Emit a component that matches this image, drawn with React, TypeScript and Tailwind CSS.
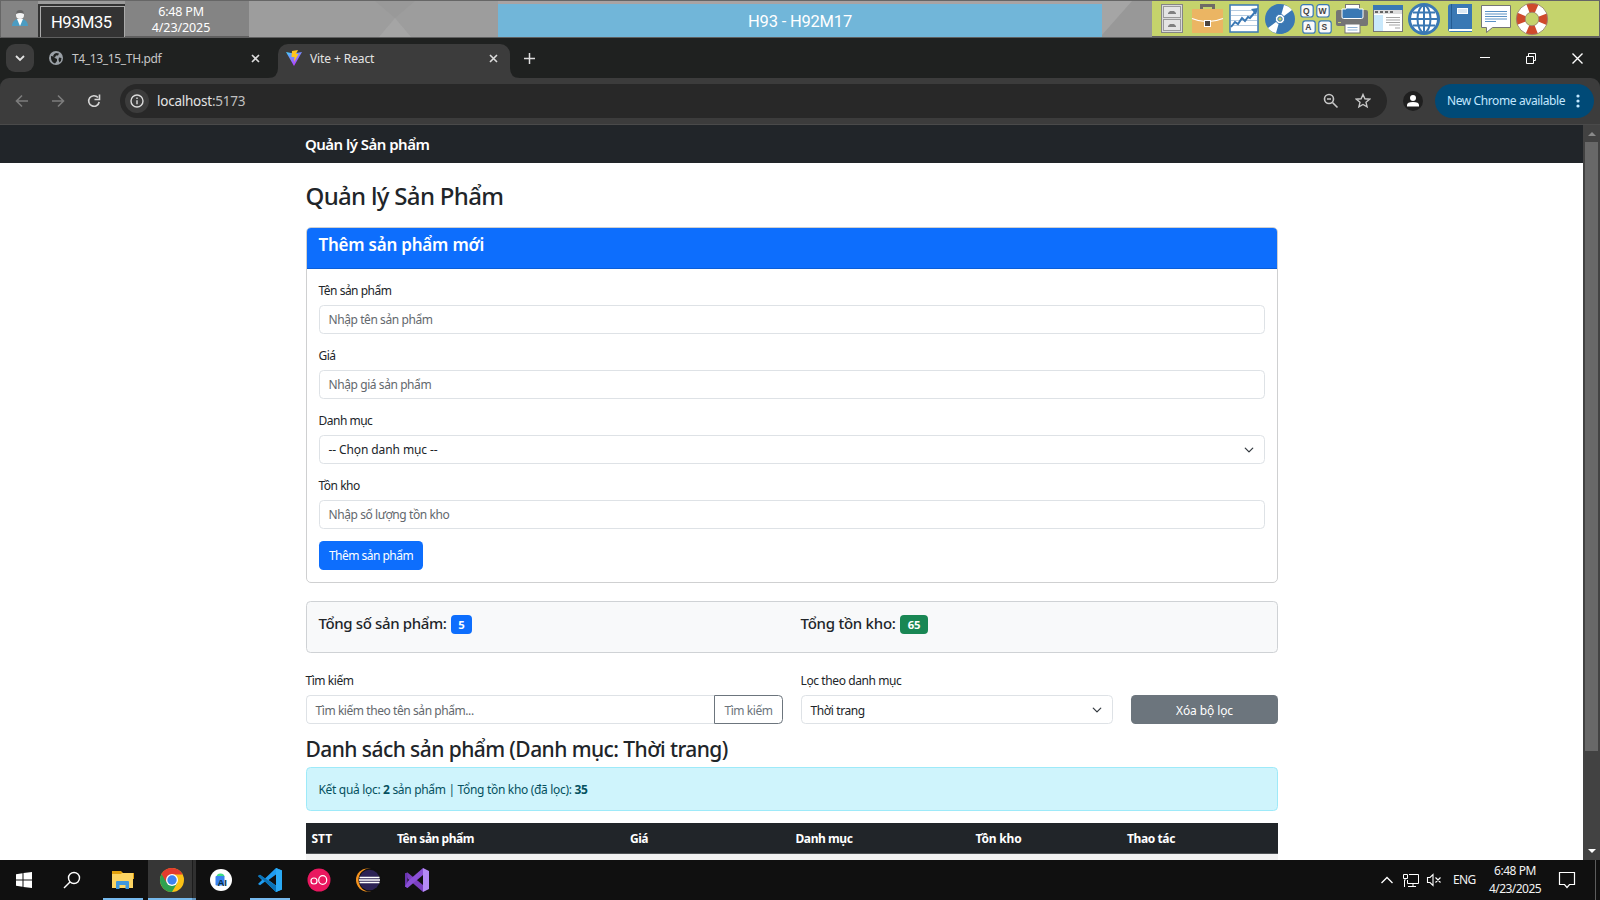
import type { ReactNode } from "react";

const noto = "font-['Noto_Sans','Open_Sans',sans-serif]";
const roboto = "font-['Roboto','Noto_Sans',sans-serif]";

/* A slice of a horizontal icon strip; children are drawn in strip coordinates. */
function Slot({ x, w, h, top = 0, children }: { x: number; w: number; h: number; top?: number; children?: ReactNode }) {
  return (
    <svg className="block shrink-0" width={w} height={h} viewBox={`${x} ${top} ${w} ${h}`} fill="none">
      {children}
    </svg>
  );
}

function TrayIcons() {
  const key = (x: number, y: number, c: string) => (
    <g key={c}>
      <rect x={x} y={y} width="12.4" height="12.4" rx="2.5" fill="#fafafa" stroke="#3a78b4" strokeWidth="1.2" />
      <text x={x + 5.6} y={y + 9} textAnchor="middle" fontSize="8.5" fontWeight="700" fill="#444" fontFamily="Liberation Sans, sans-serif">{c}</text>
    </g>
  );
  return (
    <div className="flex h-[35px] w-[447px] bg-[#c5d36c]">
      <Slot top={1} x={1152} w={36} h={35}>
        <rect x="1161.5" y="4.5" width="21" height="28" fill="#d9d9d9" stroke="#858585" />
        <rect x="1163.5" y="6.5" width="17" height="11" fill="#e4e4e4" stroke="#999" />
        <rect x="1163.5" y="19.5" width="17" height="11" fill="#e4e4e4" stroke="#999" />
        <path d="M1168 14v-1l2-2h4l2 2v1zM1168 27v-1l2-2h4l2 2v1z" fill="#808080" />
      </Slot>
      <Slot top={1} x={1188} w={38} h={35}>
        <path d="M1201.5 9V5.5h12V9" stroke="#6e6a66" strokeWidth="3" />
        <rect x="1192" y="9" width="31" height="24" fill="#ebb563" />
        <path d="M1192 18.500q15 6.500 31 0" stroke="#fff" strokeWidth="1.200" />
        <rect x="1204.500" y="20.500" width="6" height="6" fill="#4d4640" stroke="#fff" />
      </Slot>
      <Slot top={1} x={1226} w={36} h={35}>
        <rect x="1230" y="5" width="28" height="27" fill="#fff" stroke="#3a78b4" strokeWidth="1.500" />
        <path d="M1231 10.500h26M1231 15.500h26M1231 20.500h26M1231 25.500h26" stroke="#b5cbe0" />
        <path d="m1231 27 4-5 3 2 4-6 3 3 3-4 2 1 6-7" stroke="#3a78b4" strokeWidth="2" />
        <path d="m1251 9 7-1-2 7z" fill="#3a78b4" />
      </Slot>
      <Slot top={1} x={1262} w={36} h={35}>
        <circle cx="1280" cy="19" r="15" fill="#3a78b4" />
        <path d="m1280 19-8-12q4-3 7-3zM1280 19l8 12q-4 3-7 3z" fill="#3a78b4" />
        <path d="m1280 19 4-14q5 1 8 5zM1280 19l-4 14q-5-1-8-5z" fill="#fff" />
        <circle cx="1280" cy="19" r="4.700" fill="#fff" stroke="#3a78b4" />
        <circle cx="1280" cy="19" r="2.200" fill="#c5d36c" stroke="#3a78b4" />
      </Slot>
      <Slot top={1} x={1298} w={36} h={35}>
        {key(1300.8, 4.6, "Q")}
        {key(1316.8, 4.6, "W")}
        {key(1302.8, 20.8, "A")}
        {key(1318.8, 20.8, "S")}
      </Slot>
      <Slot top={1} x={1334} w={36} h={35}>
        <rect x="1336" y="10" width="32" height="16" rx="2" fill="#757575" />
        <rect x="1345.500" y="4.500" width="14" height="6" fill="#fff" stroke="#757575" />
        <path d="M1342 9h4v-1h13v1h4v8q0 1.500-1.500 1.500h-18q-1.500 0-1.500-1.500z" fill="#3a78b4" stroke="#fff" />
        <rect x="1345" y="24" width="15" height="9" fill="#fff" stroke="#757575" />
        <path d="M1347.500 27.500h10M1347.500 30h10" stroke="#8fb3d6" />
        <path d="M1338 22.500h3" stroke="#c5d36c" />
      </Slot>
      <Slot top={1} x={1370} w={36} h={35}>
        <rect x="1373.500" y="5.500" width="29" height="26" fill="#fff" stroke="#757575" />
        <rect x="1373" y="5" width="30" height="5" fill="#3a78b4" />
        <path d="M1374 12h28" stroke="#ddd" strokeWidth="4" />
        <path d="M1375 12h18" stroke="#666" strokeWidth="2" strokeDasharray="3 2" />
        <rect x="1374" y="15" width="9" height="16" fill="#c9e8fb" />
        <path d="M1386 17.500h14M1386 20h14M1386 22.500h14M1389 25h11M1395 28h5" stroke="#a5a5a5" />
      </Slot>
      <Slot top={1} x={1406} w={38} h={35}>
        <circle cx="1424" cy="19" r="16" fill="#3a78b4" />
        <circle cx="1424" cy="19" r="13" fill="#fff" />
        <path d="M1424 5v28M1411 19h26M1413 12.500h22M1413 25.500h22" stroke="#3a78b4" strokeWidth="2" />
        <ellipse cx="1424" cy="19" rx="6.500" ry="13.500" stroke="#3a78b4" strokeWidth="2" />
      </Slot>
      <Slot top={1} x={1444} w={32} h={35}>
        <path d="M1448 7q0-3 3-3h21v28h-21q-3 0-3-3z" fill="#3a78b4" />
        <path d="M1451.500 4v25" stroke="#245b92" />
        <path d="M1449 30h23" stroke="#fff" strokeWidth="2" />
        <rect x="1457.500" y="8.500" width="10" height="5" fill="#dce8f4" stroke="#fff" />
      </Slot>
      <Slot top={1} x={1476} w={38} h={35}>
        <path d="M1481.500 5.500h29v22h-18l-6 5v-5h-5z" fill="#fff" stroke="#757575" />
        <path d="M1485 11.500h22M1485 14h22M1485 16.500h22M1485 19h22M1485 21.500h11" stroke="#5b92c5" />
      </Slot>
      <Slot top={1} x={1514} w={38} h={35}>
        <circle cx="1532" cy="19" r="11.300" stroke="#fff" strokeWidth="8.500" />
        <circle cx="1532" cy="19" r="11.300" stroke="#cf4a2c" strokeWidth="9" strokeDasharray="8.875 8.875" strokeDashoffset="4.440" />
        <circle cx="1532" cy="19" r="15.700" stroke="#94806f" strokeWidth=".8" />
        <circle cx="1532" cy="19" r="6.800" stroke="#94806f" strokeWidth=".8" />
      </Slot>
    </div>
  );
}

function ControlBar() {
  return (
    <header className={`flex h-[38px] border border-b-2 border-[#666] border-b-[#5f5f5f] bg-[#9c9c9c] ${roboto}`}>
      <div className="flex h-[36px] w-[37px] bg-[#848484]">
        <svg className="ml-[11px] mt-[9px]" width="16" height="17" viewBox="0 0 16 17">
          <path d="M0 16q0-5 5-7h6q5 2 5 7z" fill="#4c9cc2" />
          <path d="m5 9 3 7 3-7z" fill="#fff" />
          <circle cx="8" cy="5" r="4" fill="#f4f4f4" />
          <path d="M4 4q0-4 4-4t4 4q-4-2-8 0z" fill="#666" />
        </svg>
      </div>
      <div className="mt-[3px] h-[33px] w-[87px] bg-[#333] pl-[2px] pt-[2px]">
        <div className="h-full border border-b-0 border-[#aaa] pl-[10px] text-[16.500px] leading-[31px] tracking-[-0.45px] text-white">H93M35</div>
      </div>
      <div className={`w-[124px] bg-[#848484] pr-[12px] pt-[3px] text-center text-[12.500px] leading-[16px] text-white ${noto}`}>
        <div className="tracking-[-0.2px]">6:48 PM</div>
        <div className="tracking-[-0.1px]">4/23/2025</div>
      </div>
      <svg className="h-[36px] w-[249px]" viewBox="0 0 249 36">
        <rect width="249" height="36" fill="#9d9d9d" />
        <path d="m126 0 20 17 20-17z" fill="#999" />
        <path d="m130 36 16-19 16 19z" fill="#a5a5a5" />
      </svg>
      <div className="h-[36px] w-[604px] bg-[#a9a3a3] pt-[3px]">
        <div className="h-[33px] bg-[#71b6d9] text-center text-[16.500px] leading-[35px] tracking-[-0.2px] text-white">H93 - H92M17</div>
      </div>
      <svg className="h-[36px] w-[50px]" viewBox="0 0 50 36">
        <rect width="50" height="36" fill="#989898" />
        <path d="M0 0h30L0 34z" fill="#a5a5a5" />
      </svg>
      <TrayIcons />
    </header>
  );
}

function CloseX() {
  return (
    <svg width="9" height="9" viewBox="0 0 9 9" stroke="#dcdcdc" strokeWidth="1.600">
      <path d="m1 1 7 7M8 1 1 8" />
    </svg>
  );
}

function TabStrip() {
  return (
    <div className={`flex h-[40px] bg-[#1f2120] pl-[6px] pt-[6px] text-[12px] leading-[29px] ${noto}`}>
      <div className="flex h-[28px] w-[28px] items-center justify-center rounded-[9px] bg-[#3c3c3c]">
        <svg width="10" height="7" viewBox="0 0 10 7" fill="none" stroke="#e3e3e3" strokeWidth="1.800"><path d="m1 1 4 4 4-4" /></svg>
      </div>
      <div className="flex w-[244px] pl-[15px] text-[#c7c7c7]">
        <svg className="mt-[7px]" width="14" height="14" viewBox="0 0 14 14">
          <circle cx="7" cy="7" r="7" fill="#9aa0a6" />
          <path d="M2 5q3 0 4 2l2 1v2l-2 2.500Q1.500 11 2 5zM7 2q2 0 3 .5l-1 2H7l-1 2-2-1.500q1-2.500 3-3zM10 6.500l2.500.5q0 3-2 4.500L9.500 9z" fill="#1f2120" />
        </svg>
        <span className="w-[188px] pl-[9px] tracking-[-0.35px]">T4_13_15_TH.pdf</span>
        <span className="mt-[10px]"><CloseX /></span>
      </div>
      <div className="relative flex h-[34px] w-[232px] rounded-t-[10px] bg-[#3c3c3c] pl-[8px] text-[#e3e3e3]">
        <svg className="absolute -left-[10px] bottom-0" width="10" height="10" viewBox="0 0 10 10"><path d="M10 0v10H0Q10 10 10 0" fill="#3c3c3c" /></svg>
        <svg className="absolute -right-[10px] bottom-0" width="10" height="10" viewBox="0 0 10 10"><path d="M0 0v10h10Q0 10 0 0" fill="#3c3c3c" /></svg>
        <svg className="mt-[6px]" width="16" height="16" viewBox="0 0 16 16">
          <defs><linearGradient id="vite" x1="0" y1="0" x2=".6" y2="1"><stop stopColor="#41d1ff" /><stop offset="1" stopColor="#bd34fe" /></linearGradient></defs>
          <path d="M0 2l7.500 1.500L16 2 8 16z" fill="url(#vite)" />
          <path d="m6 1 6-1-2 4h2.500L8 12l.5-5H5.500z" fill="#ffc51c" />
        </svg>
        <span className="w-[187px] pl-[8px] tracking-[-0.1px]">Vite + React</span>
        <span className="mt-[10px]"><CloseX /></span>
      </div>
      <svg className="ml-[14px] mt-[9px]" width="11" height="11" viewBox="0 0 11 11" stroke="#dedede" strokeWidth="1.500"><path d="M5.500 0v11M0 5.500h11" /></svg>
      <svg className="ml-auto mr-[17px] mt-[9px]" width="103" height="11" viewBox="0 0 103 11" fill="none" stroke="#fff">
        <path d="M0 4.500h10M46.500 3.500h7v7h-7zM48.500 3v-2.500h7v7H54" />
        <path d="m92.500 .5 10 10M102.500 .5l-10 10" strokeWidth="1.400" />
      </svg>
    </div>
  );
}

function Toolbar() {
  return (
    <div className="bg-[#1f2120]">
      <div className={`flex h-[47px] items-start rounded-t-[9px] border-b border-[#4a4a4a] bg-[#3c3c3c] pt-[6px] ${noto}`}>
        <svg className="ml-[14px] mt-[9px]" width="90" height="16" viewBox="14 0 90 16" fill="none" stroke="#7c7c7c" strokeWidth="1.600">
          <path d="M28 8H16.500M22 2.500 16.500 8l5.500 5.500M52 8h11.500M58 2.500 63.500 8 58 13.500" />
          <path d="M98 4.500A5.300 5.300 0 1 0 99.200 9" stroke="#d5d5d5" />
          <path d="M99.500 1.500v5h-5" stroke="#d5d5d5" />
        </svg>
        <div className="ml-[16px] flex h-[34px] w-[1267px] items-center rounded-full bg-[#282828] pl-[5px]">
          <span className="flex h-[24px] w-[24px] items-center justify-center rounded-full bg-[#3c3c3c]">
            <svg width="14" height="14" viewBox="0 0 14 14" fill="none" stroke="#dcdcdc" strokeWidth="1.400">
              <circle cx="7" cy="7" r="6" /><path d="M7 6.200v4M7 3.500v1.500" />
            </svg>
          </span>
          <span className="ml-[8px] text-[13.500px] leading-[34px] tracking-[-0.24px] text-[#e3e3e3]">localhost<span className="text-[#c0c0c0]">:5173</span></span>
          <svg className="ml-auto" width="16" height="16" viewBox="0 0 16 16" fill="none" stroke="#c7c7c7" strokeWidth="1.600">
            <circle cx="6" cy="6" r="4.500" /><path d="m9.500 9.500 5 5M4 6h4" />
          </svg>
          <svg className="ml-[16px] mr-[16px]" width="16" height="16" viewBox="0 0 16 16" fill="none" stroke="#c7c7c7" strokeWidth="1.400">
            <path d="m8 1.500 1.900 4.300 4.700.4-3.600 3.100 1.100 4.600L8 11.500l-4.100 2.400L5 9.300 1.400 6.200l4.700-.4z" />
          </svg>
        </div>
        <svg className="ml-[16px] mt-[7px]" width="20" height="20" viewBox="0 0 20 20">
          <circle cx="10" cy="10" r="10" fill="#1f1f1f" />
          <circle cx="10" cy="7" r="3" fill="#fff" />
          <path d="M4 15.500v-1.500q0-3 6-3t6 3v1.500z" fill="#fff" />
        </svg>
        <div className="ml-[12px] flex h-[34px] w-[159px] items-center rounded-full bg-[#004a77] pl-[12px]">
          <span className="w-[129px] text-[12px] leading-[34px] tracking-[-0.4px] text-[#c2e7ff]">New Chrome available</span>
          <svg width="4" height="14" viewBox="0 0 4 14" fill="#c2e7ff"><circle cx="2" cy="2" r="1.600" /><circle cx="2" cy="7" r="1.600" /><circle cx="2" cy="12" r="1.600" /></svg>
        </div>
      </div>
    </div>
  );
}

function Chevron() {
  return (
    <svg className="ml-auto mr-[10px]" width="10" height="10" viewBox="0 0 16 16" fill="none" stroke="#343a40" strokeWidth="2" strokeLinecap="round" strokeLinejoin="round">
      <path d="m2 5 6 6 6-6" />
    </svg>
  );
}

const control = "flex h-[29px] items-center rounded-[4.500px] border border-[#dee2e6] bg-white pl-[8.500px] text-[12px] leading-[18px] whitespace-nowrap";
const label = "mb-[5px] -ml-[0.5px] h-[19px] text-[12px] leading-[20px]";

function Field({ name, text, select }: { name: string; text: string; select?: boolean }) {
  return (
    <div className="mb-3">
      <div className={`${label} tracking-[-0.5px]`}>{name}</div>
      {select ? (
        <div className={`${control} tracking-[-0.1px]`}>{text}<Chevron /></div>
      ) : (
        <div className={`${control} tracking-[-0.42px] text-[#63686d]`}>{text}</div>
      )}
    </div>
  );
}

function ProductForm() {
  return (
    <section className="mt-[17px] h-[356px] overflow-hidden rounded-[5px] border border-[#cfd0d1] bg-white">
      <h4 className="h-[41px] border-b border-[#0b5ed7] bg-[#0d6efd] px-[11.500px] pt-[7px] text-[17px] font-semibold leading-[20px] tracking-[-0.22px] text-white">Thêm sản phẩm mới</h4>
      <div className="p-3">
        <Field name="Tên sản phẩm" text="Nhập tên sản phẩm" />
        <Field name="Giá" text="Nhập giá sản phẩm" />
        <Field name="Danh mục" text="-- Chọn danh mục --" select />
        <Field name="Tồn kho" text="Nhập số lượng tồn kho" />
        <button className="block h-[29px] w-[104px] whitespace-nowrap rounded-[4.500px] bg-[#0d6efd] text-[12px] leading-[29px] tracking-[-0.52px] text-white">Thêm sản phẩm</button>
      </div>
    </section>
  );
}

function Summary() {
  return (
    <section className="mt-[18px] flex h-[52px] rounded-[4.500px] border border-[#cfd2d5] bg-[#f8f9fa] pl-[11.500px] pt-3 text-[15px] font-medium leading-[18px]">
      <div className="flex w-[482px]">
        <span className="w-[132.500px] whitespace-nowrap tracking-[-0.37px]">Tổng số sản phẩm:</span>
        <span className="mt-px h-[19px] w-[21px] rounded-[4px] bg-[#0d6efd] text-center text-[11.300px] font-bold leading-[20px] text-white">5</span>
      </div>
      <span className="w-[99.500px] whitespace-nowrap tracking-[-0.25px]">Tổng tồn kho:</span>
      <span className="mt-px h-[19px] w-[28px] rounded-[4px] bg-[#198754] text-center text-[11.300px] font-bold leading-[20px] tracking-[-0.3px] text-white">65</span>
    </section>
  );
}

function Filters() {
  return (
    <section className="mt-[18px] flex items-end">
      <div className="w-[477px]">
        <div className={`${label} tracking-[-0.45px]`}>Tìm kiếm</div>
        <div className="flex">
          <div className={`${control} w-[408px] rounded-r-none border-r-0 pt-[2px] tracking-[-0.43px] text-[#63686d]`}>Tìm kiếm theo tên sản phẩm...</div>
          <button className="h-[29px] w-[69px] whitespace-nowrap rounded-r-[4.500px] border border-[#6c757d] text-[12px] leading-[29px] tracking-[-0.42px] text-[#6c757d]">Tìm kiếm</button>
        </div>
      </div>
      <div className="ml-[18px] w-[312px]">
        <div className={`${label} tracking-[-0.4px]`}>Lọc theo danh mục</div>
        <div className={`${control} tracking-[-0.4px]`}><span className="pt-[2px]">Thời trang</span><Chevron /></div>
      </div>
      <button className="ml-[18px] h-[29px] w-[147px] rounded-[4.500px] bg-[#6c757d] text-[12px] leading-[31px] tracking-[-0.1px] text-white">Xóa bộ lọc</button>
    </section>
  );
}

function Results() {
  return (
    <>
      <h3 className="-ml-[0.5px] mt-[13px] h-[24px] whitespace-nowrap text-[21px] font-medium leading-[25px] tracking-[-0.57px]">Danh sách sản phẩm (Danh mục: Thời trang)</h3>
      <div className="mt-[6px] h-[44px] whitespace-nowrap rounded-[4.500px] border border-[#9eeaf9] bg-[#cff4fc] pl-[11.500px] pt-3 text-[12px] leading-[20px] tracking-[-0.32px] text-[#055160]">
        Kết quả lọc: <b>2</b> sản phẩm | Tổng tồn kho (đã lọc): <b>35</b>
      </div>
      <div className="mt-3 grid h-[31px] grid-cols-[85px_233px_166px_180px_151px_157px] border-b border-[#4d5154] bg-[#212529] text-[12px] font-bold leading-[31px] text-white">
        <span className="pl-[5.500px]">STT</span>
        <span className="pl-[6px] tracking-[-0.46px]">Tên sản phẩm</span>
        <span className="pl-[6px] tracking-[-0.5px]">Giá</span>
        <span className="pl-[5.500px] tracking-[-0.42px]">Danh mục</span>
        <span className="pl-[5.500px] tracking-[-0.18px]">Tồn kho</span>
        <span className="pl-[6px] tracking-[-0.4px]">Thao tác</span>
      </div>
      <div className="h-[40px] bg-[#f2f2f2]" />
    </>
  );
}

function Taskbar() {
  return (
    <footer className={`flex h-[40px] bg-[#101010] text-[12px] text-[#f2f2f2] ${noto}`}>
      <Slot x={0} w={48} h={40}>
        <path d="M16 14.300 22.500 13.300V19.500H16zM23.500 13.100 32 12v7.500h-8.500zM16 20.500h6.500v6.200L16 25.700zM23.500 20.500H32V28l-8.500-1.100z" fill="#fff" />
      </Slot>
      <Slot x={48} w={52} h={40}>
        <circle cx="74" cy="18" r="5.500" stroke="#fff" strokeWidth="1.400" />
        <path d="m70 22-6 6" stroke="#fff" strokeWidth="1.400" />
      </Slot>
      <Slot x={100} w={48} h={40}>
        <path d="M112 11h9l2 2h11v6h-22z" fill="#e2a10d" />
        <path d="M112 14h9l1-1h11v15h-21z" fill="#fcd462" />
        <path d="M116 29v-7q0-1 1-1h11q1 0 1 1v7h-3.500v-4h-6v4z" fill="#3f97dc" />
        <rect x="103" y="38" width="40" height="2" fill="#76b9ed" />
      </Slot>
      <Slot x={148} w={48} h={40}>
        <rect x="148" width="44" height="40" fill="#363636" />
        <rect x="192" width="1" height="40" fill="#1c1c1c" />
        <rect x="193" width="3" height="40" fill="#303030" />
        <circle cx="172" cy="20" r="12" fill="#fbc116" />
        <path d="M172 20 161.600 14A12 12 0 0 0 172 32l5.200-9z" fill="#2fa14f" />
        <path d="M172 14.500h10.600A12 12 0 0 0 161.600 14l5 8.800z" fill="#e33b2e" />
        <circle cx="172" cy="20" r="6" fill="#fff" />
        <circle cx="172" cy="20" r="4.700" fill="#3f83f0" />
        <rect x="148" y="38" width="44" height="2" fill="#76b9ed" />
        <rect x="192" y="38" width="4" height="2" fill="#5f93bd" />
      </Slot>
      <Slot x={196} w={50} h={40}>
        <circle cx="221" cy="20" r="11" fill="#fff" />
        <path d="M216.500 17a4 3.500 0 0 1 8 0z" fill="#3ddc84" />
        <rect x="215.500" y="16" width="9" height="9.500" rx="1" fill="#3b83ef" />
        <text x="217.500" y="26" fontSize="9.500" fontWeight="700" fill="#073042" fontFamily="Liberation Sans, sans-serif">AI</text>
      </Slot>
      <Slot x={246} w={48} h={40}>
        <path d="m276 8 6 2.500v19L276 32l-11-10.500-5 3.800-2-1.300 4-4-4-4 2-1.300 5 3.800zM276 14.500 268.500 20l7.500 5.500z" fill="#1f9cf0" fillRule="evenodd" />
        <path d="M258 16 260 14.700l16 11V32L265 21.500z" fill="#0a73b8" />
        <path d="m276 8 6 2.500v19L276 32z" fill="#2aaaf5" />
        <rect x="250" y="38" width="40" height="2" fill="#76b9ed" />
      </Slot>
      <Slot x={294} w={50} h={40}>
        <circle cx="319" cy="20" r="11.500" fill="#e9175f" />
        <circle cx="314" cy="21" r="3" stroke="#fff" strokeWidth="1.200" />
        <ellipse cx="322.700" cy="20" rx="4" ry="4.400" stroke="#fff" strokeWidth="1.200" />
      </Slot>
      <Slot x={344} w={48} h={40}>
        <circle cx="367.500" cy="20" r="11.500" fill="#f7941e" />
        <circle cx="370" cy="20" r="11.500" fill="#101010" />
        <circle cx="369.500" cy="20" r="10.300" fill="#2c2255" />
        <path d="M359.500 17.500h20M359 20h21M359.500 22.500h20" stroke="#fff" strokeWidth="1.300" />
      </Slot>
      <Slot x={392} w={50} h={40}>
        <path d="m405 13.500 2.500-1L423 25v7l-15-13z" fill="#7b3fc0" />
        <path d="M405 13.500 407.500 12.500V28l-2.500-1.500z" fill="#6a35b0" />
        <path d="m405 26.500 2.500 1.500L423 15V8l-15 13z" fill="#8a4fd6" />
        <path d="m423 8 6 3v18l-6 3z" fill="#b58af5" />
      </Slot>
      <div className="ml-auto flex">
        <Slot x={1376} w={72} h={40}>
          <path d="m1381.500 23 5.500-5.500 5.500 5.500" stroke="#fff" strokeWidth="1.300" />
          <path d="M1409 14.500h9.500v9h-11V20M1413 24v3M1408 26.500h8M1404.500 20v7M1403.500 14.500h4v4h-4zM1405 18.500v2" stroke="#fff" />
          <path d="M1427.500 17.500h2.500l3-3v11l-3-3h-2.500zM1435.500 17.500l5 5M1440.500 17.500l-5 5" stroke="#fff" strokeWidth="1.100" />
        </Slot>
        <span className="w-[32px] pl-[5px] leading-[40px] tracking-[-0.6px]">ENG</span>
        <div className="w-[70px] pt-[2px] text-center leading-[18px]">
          <div className="tracking-[-0.44px]">6:48 PM</div>
          <div className="tracking-[-0.55px]">4/23/2025</div>
        </div>
        <Slot x={1550} w={50} h={40}>
          <path d="M1559.500 12.500h15v12h-5l-2.500 3-2.500-3h-5z" stroke="#fff" strokeWidth="1.200" />
          <path d="M1595.500 0v40" stroke="#5c5c5c" />
        </Slot>
      </div>
    </footer>
  );
}

export default function App() {
  return (
    <div className="flex h-[900px] w-[1600px] flex-col overflow-hidden bg-white">
      <ControlBar />
      <TabStrip />
      <Toolbar />
      <div className={`flex h-[735px] overflow-hidden text-[#212529] ${noto}`}>
        <div className="w-[1583px]">
          <nav className="h-[38px] bg-[#212529] pl-[305px] text-[15px] font-semibold leading-[39px] tracking-[-0.52px] text-white">Quản lý Sản phẩm</nav>
          <main className="ml-[306px] w-[972px] pt-[18px]">
            <h2 className="-ml-[0.5px] h-[29px] text-[24px] font-medium leading-[29px] tracking-[-0.68px]">Quản lý Sản Phẩm</h2>
            <ProductForm />
            <Summary />
            <Filters />
            <Results />
          </main>
        </div>
        <div className="flex w-[17px] flex-col items-center bg-[#424242]">
          <svg className="mt-[7px]" width="8" height="4" viewBox="0 0 8 4"><path d="M0 4 4 0l4 4z" fill="#8a8a8a" /></svg>
          <div className="mt-[6px] h-[609px] w-[13px] bg-[#686868]" />
          <svg className="mb-[7px] mt-auto" width="8" height="4" viewBox="0 0 8 4"><path d="m0 0 4 4 4-4z" fill="#fff" /></svg>
        </div>
      </div>
      <Taskbar />
    </div>
  );
}
